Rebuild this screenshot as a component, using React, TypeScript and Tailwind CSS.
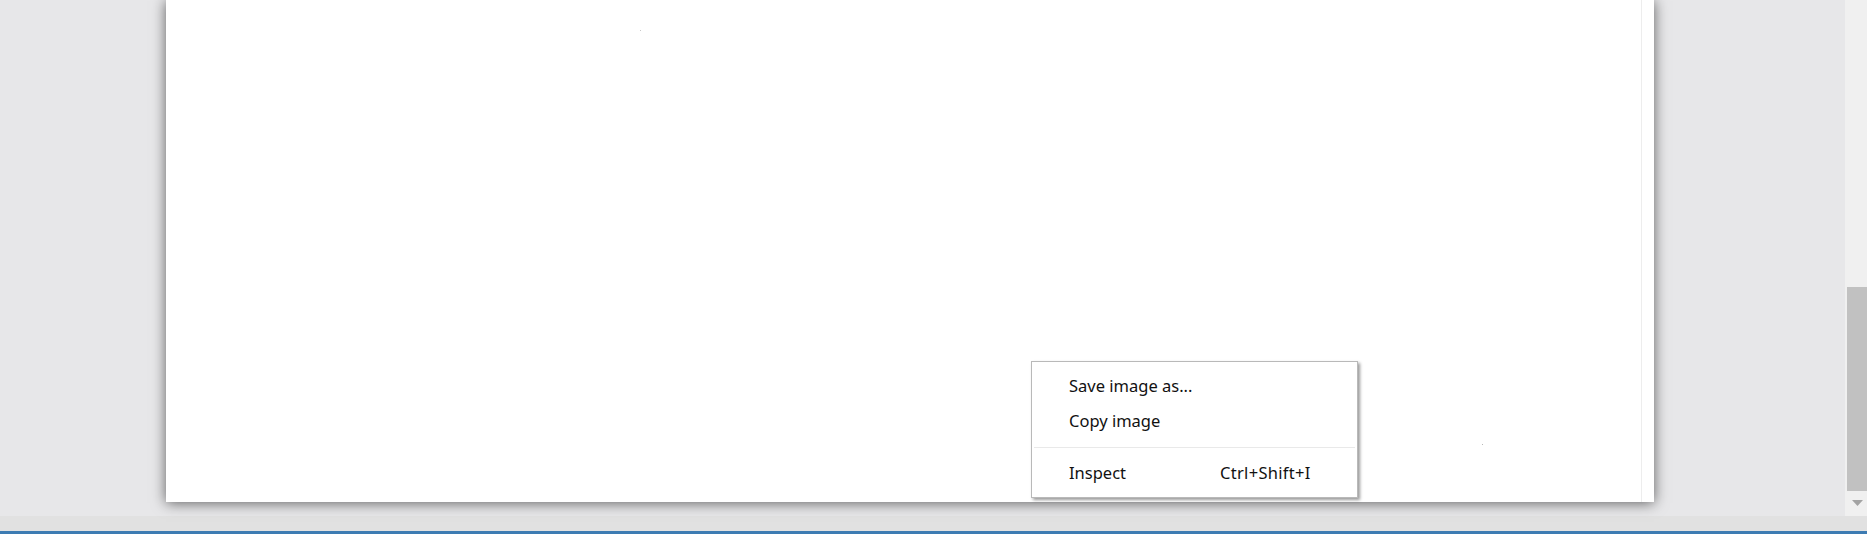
import React from "react";

export default function App() {
  return (
    <div className="relative h-[534px] w-full overflow-hidden bg-[#e7e7e9] flex flex-col" style={{ fontFamily: '"Noto Sans", "Open Sans", sans-serif' }}>
      <div className="flex h-[516px] w-full">
        <div className="flex-1 relative">
          <div className="ml-[166px] w-[1488px] h-[502px] bg-white shadow-[0_1px_13px_rgba(0,0,0,0.6)] relative">
            <div className="absolute right-[12px] top-0 h-full w-[1px] bg-[#ededed]" />
            <div className="absolute left-[474px] top-[30px] h-[1px] w-[1px] bg-[#c8c8c8]" />
            <div className="absolute left-[1316px] top-[444px] h-[1px] w-[1px] bg-[#b8b8b8]" />
          </div>
        </div>
        <div className="w-[22px] h-full bg-[#f0f0f0] flex flex-col">
          <div className="h-[287px]" />
          <div className="ml-[2px] h-[204px] bg-[#c1c1c1]" />
          <div className="flex-1 flex items-start justify-center pt-[9px] pl-[2px]">
            <svg width="11" height="6" viewBox="0 0 11 6">
              <polygon points="0,0 11,0 5.5,6" fill="#a3a3a3" />
            </svg>
          </div>
        </div>
      </div>
      <div className="h-[15px] bg-[#e1e1e1]" />
      <div className="h-[3px] bg-[#3d7bb2]" />

      <div className="absolute left-[1031px] top-[361px] w-[327px] h-[137px] bg-white border border-[#b9b9b9] shadow-[2px_2px_3px_rgba(0,0,0,0.4)] pt-[7px] text-[16.5px] text-[#111111]">
        <div className="h-[35px] flex items-center pl-[37px]">Save image as...</div>
        <div className="h-[35px] flex items-center pl-[37px]">Copy image</div>
        <div className="mt-[8px] mx-[2px] h-[1px] bg-[#e9e9e9]" />
        <div className="mt-[8px] h-[35px] flex items-center pl-[37px]">
          <span className="w-[151px]">Inspect</span>
          <span className="tracking-[0.3px]">Ctrl+Shift+I</span>
        </div>
      </div>
    </div>
  );
}
